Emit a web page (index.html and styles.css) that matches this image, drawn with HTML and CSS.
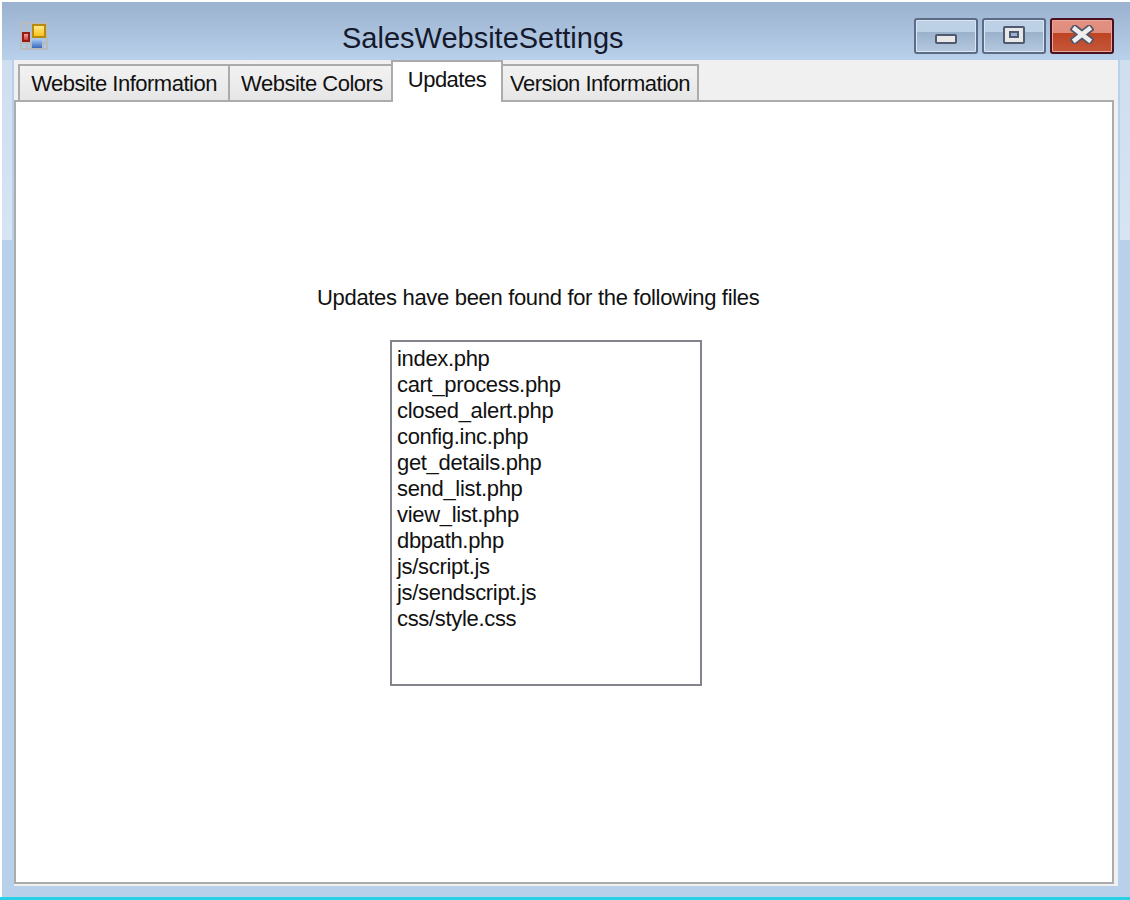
FILE: index.html
```html
<!DOCTYPE html>
<html lang="en">
<head>
<meta charset="utf-8">
<title>SalesWebsiteSettings</title>
<link rel="stylesheet" href="styles.css">
</head>
<body>
<div class="window">
  <header class="titlebar">
    <svg class="app-icon" width="28" height="28" viewBox="0 0 28 28">
      <defs>
        <linearGradient id="gy" x1="0" y1="0" x2="0" y2="1"><stop offset="0" stop-color="#ffe98a"/><stop offset="1" stop-color="#fcc21c"/></linearGradient>
        <linearGradient id="gb" x1="0" y1="0" x2="0" y2="1"><stop offset="0" stop-color="#9cc0f0"/><stop offset="1" stop-color="#3a68bf"/></linearGradient>
        <linearGradient id="gr" x1="0" y1="0" x2="0" y2="1"><stop offset="0" stop-color="#f0a0a0"/><stop offset="1" stop-color="#cc3a34"/></linearGradient>
      </defs>
      <rect x="1" y="1" width="26" height="26" fill="none" stroke="#b8bcc0" stroke-width="2"/>
      <path d="M1 21h26M7 1v26M11 21v6M23 21v6" stroke="#b8bcc0" fill="none" stroke-width="2"/>
      <rect x="12" y="2" width="14" height="14" fill="#b78a10"/>
      <rect x="14" y="4" width="10" height="10" fill="url(#gy)"/>
      <rect x="2" y="10" width="8" height="10" fill="#951a14"/>
      <rect x="4" y="12" width="4" height="6" fill="url(#gr)"/>
      <rect x="12" y="18" width="10" height="8" fill="url(#gb)"/>
    </svg>
    <h1 class="title">SalesWebsiteSettings</h1>
    <div class="controls">
      <button class="ctl ctl-min" aria-label="Minimize">
        <svg width="22" height="10" viewBox="0 0 22 10"><rect x="1" y="1" width="20" height="8" rx="1" fill="#e8e8e8" stroke="#4f5a70" stroke-width="2"/></svg>
      </button>
      <button class="ctl ctl-max" aria-label="Maximize">
        <svg width="22" height="18" viewBox="0 0 22 18"><rect x="1" y="1" width="20" height="16" rx="1" fill="#e8e8e8" stroke="#4f5a70" stroke-width="2"/><rect x="7" y="6" width="8" height="5" fill="#9db5d2" stroke="#4f5a70" stroke-width="2"/></svg>
      </button>
      <button class="ctl ctl-close" aria-label="Close">
        <svg width="24" height="19" viewBox="0 0 24 19"><path d="M5 4l14 11M19 4L5 15" fill="none" stroke="#55566a" stroke-width="8" stroke-linecap="square"/><path d="M5 4l14 11M19 4L5 15" fill="none" stroke="#efefef" stroke-width="4.500" stroke-linecap="square"/></svg>
      </button>
    </div>
  </header>
  <main class="client">
    <nav class="tabs">
      <div class="tab">Website Information</div>
      <div class="tab tab-b">Website Colors</div>
      <div class="tab tab-active">Updates</div>
      <div class="tab tab-d">Version Information</div>
    </nav>
    <section class="panel">
      <p class="message">Updates have been found for the following files</p>
      <ul class="listbox">
        <li>index.php</li>
        <li>cart_process.php</li>
        <li>closed_alert.php</li>
        <li>config.inc.php</li>
        <li>get_details.php</li>
        <li>send_list.php</li>
        <li>view_list.php</li>
        <li>dbpath.php</li>
        <li>js/script.js</li>
        <li>js/sendscript.js</li>
        <li>css/style.css</li>
      </ul>
    </section>
  </main>
</div>
<div class="taskbar-edge"></div>
</body>
</html>
```
FILE: styles.css
```css
* { box-sizing: border-box; }
html, body { margin: 0; padding: 0; background: #fff; }
body {
  width: 1130px;
  height: 900px;
  overflow: hidden;
  font-family: "Liberation Sans", Arial, sans-serif;
  color: #111;
  display: flex;
  flex-direction: column;
  padding-top: 2px;
  padding-left: 2px;
}
.window {
  height: 896px;
  padding: 0 12px 12px 12px;
  background:
    linear-gradient(#cfdff000 58px, #cfdff0 58px, #d6e4f3 238px, #d6e4f300 238px) no-repeat left top / 10px 100%,
    linear-gradient(#cfdff000 58px, #cfdff0 58px, #d6e4f3 238px, #d6e4f300 238px) no-repeat right top / 10px 100%,
    linear-gradient(#9ab2cf 0, #b8d0ea 58px, #b8d0ea 100%);
}
.titlebar {
  height: 58px;
  display: flex;
  align-items: flex-start;
  position: relative;
}
.app-icon { margin: 20px 0 0 6px; flex: none; }
.title {
  margin: 17px 0 0 294px;
  font-size: 29px;
  line-height: 38px;
  font-weight: 400;
  color: #16192b;
}
.controls {
  margin-left: auto;
  margin-top: 16px;
  margin-right: 4px;
  display: flex;
  gap: 4px;
}
.ctl {
  width: 64px;
  height: 36px;
  padding: 0;
  border: 2px solid #5d6c86;
  border-radius: 3px;
  box-shadow: inset 0 0 0 1px #dbe6f2;
  background: linear-gradient(#bcd0e6 0, #bcd0e6 38%, #9bb2cc 39%, #b4c9e0 100%);
  display: flex;
  align-items: center;
  justify-content: center;
}
.ctl-min svg { margin-top: 6px; }
.ctl-max svg { margin-bottom: 2px; }
.ctl-close svg { margin-bottom: 3px; }
.ctl-close {
  border-color: #4a1020;
  box-shadow: inset 0 0 0 1px #e6a89a;
  background: linear-gradient(#e39080 0, #df8d7c 40%, #bf4423 42%, #c4583a 100%);
}
.client {
  height: 826px;
  width: 1104px;
  background: #f0f0f0;
  display: flex;
  flex-direction: column;
}
.tabs {
  height: 40px;
  padding-left: 4px;
  display: flex;
  align-items: flex-end;
  flex: none;
  position: relative;
  z-index: 1;
}
.tab {
  height: 36px;
  width: 212px;
  border: 2px solid #ababab;
  border-bottom: 0;
  background: linear-gradient(#f2f2f2, #e6e6e6);
  font-size: 22px;
  letter-spacing: -0.5px;
  line-height: 35px;
  text-align: center;
  white-space: nowrap;
}
.tab-b { width: 165px; margin-left: -2px; padding-left: 3px; }
.tab-active {
  width: 112px;
  height: 42px;
  margin: 0 -2px -2px -2px;
  background: #fff;
  line-height: 35px;
  position: relative;
  z-index: 1;
}
.tab-d { width: 198px; }
.panel {
  width: 1100px;
  height: 784px;
  border: 2px solid #ababab;
  background: #fff;
  padding: 182px 0 0 374px;
}
.message {
  margin: 0 0 0 -73px;
  font-size: 22px;
  letter-spacing: -0.32px;
  line-height: 28px;
  white-space: nowrap;
}
.listbox {
  list-style: none;
  margin: 28px 0 0 0;
  padding: 4px 0 0 5px;
  width: 312px;
  height: 346px;
  border: 2px solid #82838d;
  font-size: 22px;
  letter-spacing: -0.32px;
  line-height: 26px;
}
.taskbar-edge {
  position: fixed;
  left: 0;
  right: 0;
  bottom: 0;
  height: 3px;
  background: #28d0e6;
}
```
